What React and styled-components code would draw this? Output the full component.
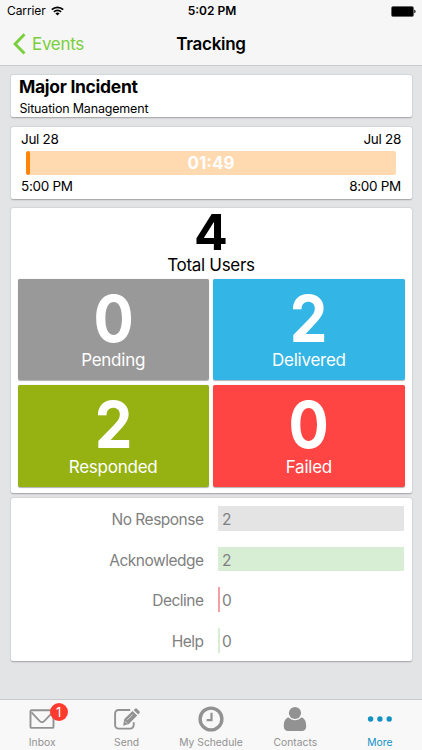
import React from "react";
import styled, { createGlobalStyle } from "styled-components";

const GlobalStyle = createGlobalStyle`
  * { box-sizing: border-box; }
  body {
    margin: 0;
    background: #e3e4e6;
    font-family: Inter, "Liberation Sans", sans-serif;
    color: #000;
  }
`;

const Screen = styled.div`
  width: 422px;
  height: 750px;
  display: flex;
  flex-direction: column;
  overflow: hidden;
`;

const Header = styled.header`
  height: 66px;
  flex: none;
  background: #f6f6f6;
  border-bottom: 1px solid #c9cacd;
`;

const StatusBar = styled.div`
  height: 22px;
  display: grid;
  grid-template-columns: 1fr auto 1fr;
  align-items: center;
  padding: 0 6px 0 7px;
  font-size: 12px;
  line-height: 22px;
`;

const Carrier = styled.span`
  display: flex;
  align-items: center;
  gap: 5.5px;
  letter-spacing: -0.1px;
`;

const Clock = styled.span`
  font-weight: 600;
  padding-left: 1px;
`;

const BatterySlot = styled.span`
  display: flex;
  justify-content: flex-end;
`;

const NavBar = styled.div`
  height: 43px;
  display: grid;
  grid-template-columns: 1fr auto 1fr;
  align-items: center;
  padding: 0 13px;
`;

const BackButton = styled.a`
  display: flex;
  align-items: center;
  gap: 6px;
  font-size: 17px;
  letter-spacing: -0.3px;
  color: #79cf3c;
`;

const NavTitle = styled.h1`
  margin: 0;
  font-size: 17px;
  font-weight: 600;
  letter-spacing: -0.3px;
`;

const Content = styled.main`
  flex: 1;
  display: flex;
  flex-direction: column;
  padding: 9px 10.5px 0 10.5px;
`;

const Card = styled.section`
  flex: none;
  height: ${(p) => p.$height}px;
  margin-bottom: ${(p) => p.$gap}px;
  padding: ${(p) => p.$padding};
  background: #fff;
  border-radius: 2px;
  box-shadow: 0 0.5px 1.5px rgba(0, 0, 0, 0.3);
`;

const EventTitle = styled.h2`
  margin: 0;
  font-size: 17.5px;
  line-height: 22px;
  font-weight: 700;
  letter-spacing: -0.3px;
`;

const EventType = styled.p`
  margin: 0 0 0 0.5px;
  font-size: 12.5px;
  line-height: 21px;
  letter-spacing: -0.18px;
`;

const Range = styled.div`
  display: flex;
  justify-content: space-between;
  font-size: 13.5px;
  line-height: ${(p) => p.$line}px;
  letter-spacing: -0.3px;
`;

const Timeline = styled.div`
  height: 24px;
  margin: 0 5px;
  display: grid;
  grid-template-columns: 4px 1fr 4px;
  background: #ffd9b0;
  border-radius: 2px;
  overflow: hidden;
`;

const Elapsed = styled.i`
  background: #ff8408;
  border-radius: 2px;
`;

const Remaining = styled.span`
  text-align: center;
  color: #fff;
  font-size: 17px;
  font-weight: 700;
  line-height: 24px;
`;

const Total = styled.div`
  text-align: center;
  height: 71px;
`;

const TotalCount = styled.div`
  font-size: 50px;
  line-height: 48px;
  font-weight: 700;
`;

const TotalLabel = styled.div`
  font-size: 17px;
  line-height: 18px;
  letter-spacing: -0.3px;
`;

const Tiles = styled.div`
  display: grid;
  grid-template-columns: 1fr 1fr;
  grid-template-rows: 101px 102px;
  gap: 5px 4.5px;
`;

const Tile = styled.div`
  display: flex;
  flex-direction: column;
  justify-content: space-between;
  background: ${(p) => p.$color};
  border-radius: 2px;
  box-shadow: 0 0.5px 1px rgba(0, 0, 0, 0.3);
  color: #fff;
  text-align: center;
  padding: 8px 0 11px;
`;

const TileCount = styled.div`
  font-size: 65px;
  line-height: 63px;
  font-weight: 700;
  transform: scaleX(0.92);
`;

const TileLabel = styled.div`
  font-size: 17px;
  line-height: 18px;
  letter-spacing: -0.25px;
`;

const ResponseRow = styled.div`
  display: grid;
  grid-template-columns: 193px 1fr;
  gap: 14.5px;
  height: 24.5px;
  margin-bottom: 16.2px;
  font-size: 15.5px;
  line-height: 27px;
  letter-spacing: -0.5px;
  color: #808080;
`;

const ResponseLabel = styled.span`
  text-align: right;
`;

const ResponseBar = styled.div`
  width: ${(p) => (p.$empty ? "2px" : "100%")};
  height: 24.5px;
  text-indent: 4px;
  background: ${(p) => p.$color};
  white-space: nowrap;
`;

const TabBar = styled.nav`
  height: 51px;
  flex: none;
  display: grid;
  grid-template-columns: repeat(5, 1fr);
  background: #f8f8f8;
  border-top: 1px solid #c9cacd;
`;

const Tab = styled.a`
  display: flex;
  flex-direction: column;
  align-items: center;
  color: ${(p) => (p.$active ? "#1492c6" : "#929292")};
  font-size: 10.3px;
  line-height: 13px;
`;

const TabIcon = styled.span`
  position: relative;
  height: 36px;
  display: flex;
  align-items: center;
  padding-top: 2px;
`;

const Badge = styled.b`
  position: absolute;
  top: 3px;
  left: 20.5px;
  width: 18px;
  height: 18px;
  border-radius: 50%;
  background: #ff3b30;
  color: #fff;
  font-size: 13px;
  font-weight: 400;
  line-height: 18px;
  text-align: center;
`;

const WifiIcon = () => (
  <svg width="13" height="10" viewBox="0 0 13 10" fill="none" stroke="#000">
    <path d="M.8 3.7a8.1 8.1 0 0 1 11.4 0" strokeWidth="1.7" />
    <path d="M2.9 5.9a5.1 5.1 0 0 1 7.2 0" strokeWidth="1.6" />
    <path d="M6.5 9.6 4.4 7.5a3 3 0 0 1 4.2 0z" fill="#000" stroke="none" />
  </svg>
);

const BatteryIcon = () => (
  <svg width="25" height="11" viewBox="0 0 25 11">
    <rect x=".5" y=".5" width="22" height="10" rx="1.5" stroke="#555" strokeWidth=".6" />
    <path d="M23.3 3.8c1.7.3 1.7 3.1 0 3.4z" />
  </svg>
);

const ChevronIcon = () => (
  <svg width="13" height="22" viewBox="0 0 13 22" fill="none" stroke="currentColor" strokeWidth="2.9">
    <path d="M11.5 1.2 2.1 10.9l9.4 9.7" />
  </svg>
);

const MailIcon = () => (
  <svg width="26" height="20" viewBox="0 0 26 20" fill="none" stroke="currentColor" strokeWidth="1.9">
    <rect x="1.5" y="1.3" width="23" height="17.6" rx="1" />
    <path d="m2.5 3.3 8 8.5c1.500 1.500 3.500 1.500 5 0l8-8.500" strokeWidth="1.7" />
  </svg>
);

const ComposeIcon = () => (
  <svg width="26" height="22" viewBox="0 0 26 22">
    <path
      d="M16.200 2H4.600A3.500 3.500 0 0 0 1.100 5.500v11.600a3.500 3.500 0 0 0 3.500 3.500h11.600a3.500 3.500 0 0 0 3.500-3.500v-2.900"
      fill="none"
      stroke="currentColor"
      strokeWidth="1.9"
    />
    <path
      d="m18.500 2.900 4.700 4.700-8.300 8.300-5.800 1.800 1.200-6.600zM19.600 2l1.500-1.300q.9-.8 1.800 0l2.500 2.500q.9.900 0 1.800L24.200 6.600z"
      fill="currentColor"
    />
    <path d="m11 13.400 2.200 2.200M13 12.200l5.600-5.600" fill="none" stroke="#f8f8f8" strokeWidth=".7" />
  </svg>
);

const ScheduleIcon = () => (
  <svg width="26" height="26" viewBox="0 0 26 26" fill="none" stroke="currentColor">
    <circle cx="13" cy="13" r="10.9" strokeWidth="3.4" />
    <path d="M13.500 6.700v7.500H8.700" strokeWidth="2.2" />
  </svg>
);

const ContactIcon = () => (
  <svg width="24" height="26" viewBox="0 0 24 26" fill="currentColor">
    <circle cx="12" cy="7" r="6.1" />
    <path d="M5.700 11.600C2 12 .8 16.300.8 20.600c0 2.900 1.800 4.500 4.200 4.500h14c2.400 0 4.200-1.600 4.200-4.500 0-4.300-1.200-8.600-4.900-9-1.600 1.600-3.700 2.600-6.300 2.600s-4.700-1-6.300-2.600z" />
  </svg>
);

const MoreIcon = () => (
  <svg width="26" height="6" viewBox="0 0 26 6" fill="currentColor">
    <circle cx="3.6" cy="3" r="2.7" />
    <circle cx="12.9" cy="3" r="2.7" />
    <circle cx="22.2" cy="3" r="2.7" />
  </svg>
);

const tiles = [
  { label: "Pending", count: 0, color: "#999999" },
  { label: "Delivered", count: 2, color: "#33b5e5" },
  { label: "Responded", count: 2, color: "#95b212" },
  { label: "Failed", count: 0, color: "#ff4444" },
];

const responses = [
  { label: "No Response", count: 2, color: "#e4e4e4" },
  { label: "Acknowledge", count: 2, color: "#d8eed4" },
  { label: "Decline", count: 0, color: "#f2a0a5" },
  { label: "Help", count: 0, color: "#d8eed4" },
];

const tabs = [
  { label: "Inbox", Icon: MailIcon, badge: 1 },
  { label: "Send", Icon: ComposeIcon },
  { label: "My Schedule", Icon: ScheduleIcon },
  { label: "Contacts", Icon: ContactIcon },
  { label: "More", Icon: MoreIcon, active: true },
];

export default function App() {
  return (
    <Screen>
      <GlobalStyle />
      <Header>
        <StatusBar>
          <Carrier>
            Carrier <WifiIcon />
          </Carrier>
          <Clock>5:02 PM</Clock>
          <BatterySlot>
            <BatteryIcon />
          </BatterySlot>
        </StatusBar>
        <NavBar>
          <BackButton>
            <ChevronIcon />
            Events
          </BackButton>
          <NavTitle>Tracking</NavTitle>
        </NavBar>
      </Header>
      <Content>
        <Card $height={42} $gap={10} $padding="1px 8.5px">
          <EventTitle>Major Incident</EventTitle>
          <EventType>Situation Management</EventType>
        </Card>
        <Card $height={72} $gap={9} $padding="0 10.5px">
          <Range $line={24}>
            <span>Jul 28</span>
            <span>Jul 28</span>
          </Range>
          <Timeline>
            <Elapsed />
            <Remaining>01:49</Remaining>
          </Timeline>
          <Range $line={22}>
            <span>5:00 PM</span>
            <span>8:00 PM</span>
          </Range>
        </Card>
        <Card $height={285} $gap={5} $padding="0 7px">
          <Total>
            <TotalCount>4</TotalCount>
            <TotalLabel>Total Users</TotalLabel>
          </Total>
          <Tiles>
            {tiles.map((t) => (
              <Tile key={t.label} $color={t.color}>
                <TileCount>{t.count}</TileCount>
                <TileLabel>{t.label}</TileLabel>
              </Tile>
            ))}
          </Tiles>
        </Card>
        <Card $height={163} $gap={0} $padding="8px 8px 0 0">
          {responses.map((r) => (
            <ResponseRow key={r.label}>
              <ResponseLabel>{r.label}</ResponseLabel>
              <ResponseBar $color={r.color} $empty={r.count === 0}>
                {r.count}
              </ResponseBar>
            </ResponseRow>
          ))}
        </Card>
      </Content>
      <TabBar>
        {tabs.map(({ label, Icon, badge, active }) => (
          <Tab key={label} $active={active}>
            <TabIcon>
              <Icon />
              {badge && <Badge>{badge}</Badge>}
            </TabIcon>
            {label}
          </Tab>
        ))}
      </TabBar>
    </Screen>
  );
}
